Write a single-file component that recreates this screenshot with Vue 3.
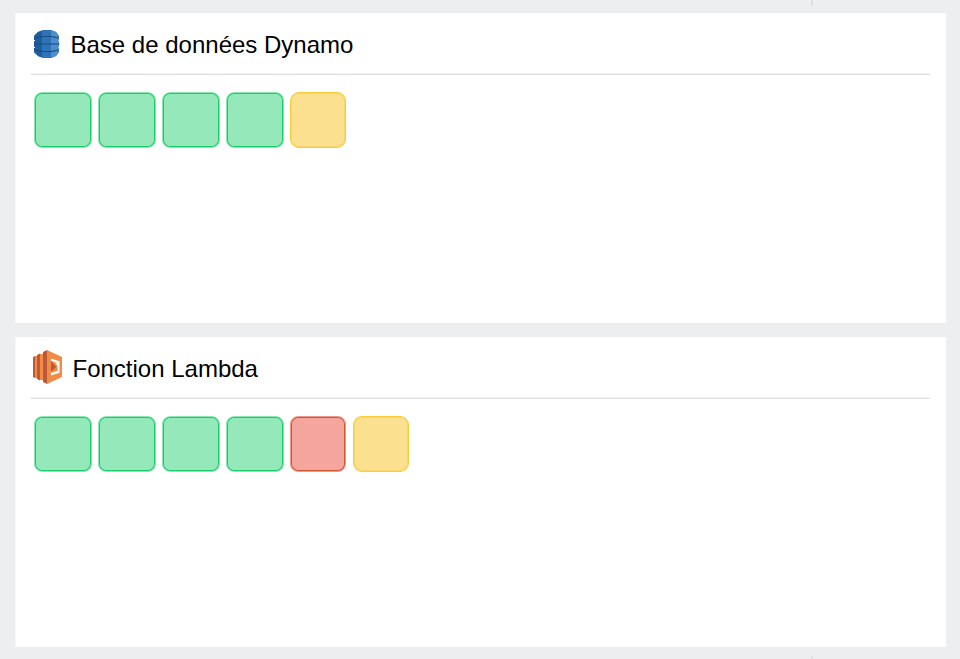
<template>
  <main class="board">
    <div class="gutter gutter-top">
      <span class="tick"></span>
    </div>

    <section v-for="service in services" :key="service.id" class="panel">
      <header class="panel-header">
        <svg v-if="service.id === 'dynamo'" class="dynamo-icon" viewBox="0 0 26 28">
          <path fill="#2e73b8" d="M9 0h8l5 2 3 4v16l-3 4-5 2H9l-5-2-4-4V6l4-4z" />
          <path fill="#1f5e9c" d="M4 2l4-1.6v27.2L4 26l-4-4V6z" />
          <path fill="#4d8dcb" d="M17 0l5 2 3 4v16l-3 4-5 2z" />
          <path fill="none" stroke="#174a7c" stroke-width="1.2" d="M1 8l7-1.5h9L25 8M0 14h25.5M1 20l7 1.5h9l8-1.5" />
          <path fill="none" stroke="#fff" stroke-width="1" d="M0 10.5h1M0 17.5h1M24.5 10.5H26M24.5 17.5H26" />
        </svg>
        <svg v-else class="lambda-icon" viewBox="0 0 29 34">
          <!-- layered plates behind the front face -->
          <path fill="#bd5838" d="M0 7l2-1v22l-2-1zM4 5l3-1.5v27L4 29zM10 2l4-2v34l-4-2z" />
          <path fill="#f08b48" d="M2 6h2v22H2zM7 4h3v26H7zM14 0l15 7v20l-15 7z" />
          <path fill="#fff" d="M18 8.5l8.5 2.8v11.4L18 25.5z" />
          <path fill="#f08b48" d="M18 10.8l6.5 2.2v8L18 23z" />
          <path fill="#bd5838" d="M18 11l5.2 6L18 22z" />
          <path fill="#fff" d="M21.5 11.8l3.5 1.4v3z" />
          <path fill="#f5b43c" d="M17.5 21.5h3v1h-3zM24 17.5h1v3h-1z" />
        </svg>
        <h2>{{ service.title }}</h2>
      </header>
      <div class="tiles">
        <span
          v-for="(status, index) in service.tiles"
          :key="index"
          class="tile"
          :class="status"
        ></span>
      </div>
    </section>

    <div class="gutter gutter-bottom">
      <span class="tick"></span>
    </div>
  </main>
</template>

<script setup>
const services = [
  {
    id: 'dynamo',
    title: 'Base de données Dynamo',
    tiles: ['ok', 'ok', 'ok', 'ok', 'warning']
  },
  {
    id: 'lambda',
    title: 'Fonction Lambda',
    tiles: ['ok', 'ok', 'ok', 'ok', 'error', 'warning']
  }
];
</script>

<style>
body {
  margin: 0;
  background: #edeef0;
}
</style>

<style scoped>
.board {
  box-sizing: border-box;
  width: 960px;
  height: 659px;
  padding: 0 14px 0 15px;
  overflow: hidden;
  background: #edeef0;
  font-family: "Liberation Sans", Arial, sans-serif;
}

.gutter {
  display: flex;
  padding-left: 796px;
}

.gutter-top {
  height: 13px;
}

.gutter-bottom {
  padding-top: 9px;
}

.tick {
  width: 2px;
  height: 6px;
  background: #dfe0e2;
}

.panel {
  box-sizing: border-box;
  height: 310px;
  padding: 0 16px;
  background: #fff;
  box-shadow: inset 1px 0 #f8f8f9;
}

.panel + .panel {
  margin-top: 14px;
}

.panel-header {
  display: flex;
  align-items: center;
  box-sizing: border-box;
  height: 62px;
  border-bottom: 1px solid #dfdfdf;
  box-shadow: inset 0 -1px #f3f3f3;
}

.panel-header h2 {
  margin: 2px 0 0;
  color: #000;
  font-size: 24px;
  font-weight: 400;
  line-height: 28px;
  white-space: nowrap;
}

.dynamo-icon {
  width: 26px;
  height: 28px;
  margin: 0 10.5px 0 3px;
}

.lambda-icon {
  width: 29px;
  height: 34px;
  margin: 0 10.5px 1px 2px;
}

.tiles {
  display: flex;
  gap: 6px;
  padding: 17px 0 0 3px;
}

.tile {
  box-sizing: border-box;
  width: 58px;
  height: 56px;
  border: 1px solid;
  border-radius: 8px;
}

.ok {
  border-color: #8de5b3;
  background: #95e8b9;
  box-shadow: inset 0 0 0 1px #18cc69;
}

.error {
  width: 56px;
  margin-right: 1px;
  border-color: #ec9a8c;
  background: #f4a69e;
  box-shadow: inset 0 0 0 1px #cf5632;
}

.warning {
  width: 56px;
  border-color: #f9cb3b;
  border-radius: 9px;
  background: #fbe18f;
  box-shadow: inset 0 0 0 1px #fad66a;
}
</style>
